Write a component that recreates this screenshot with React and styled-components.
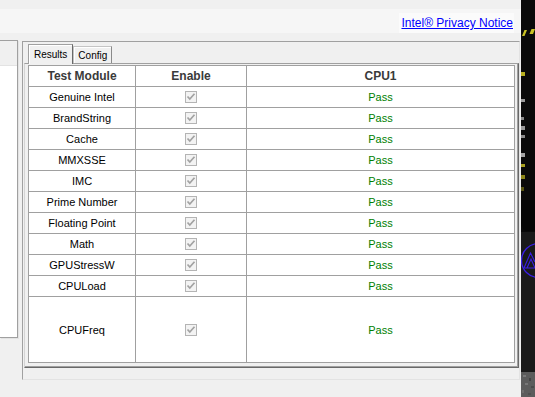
import { Fragment } from 'react'
import styled, { createGlobalStyle } from 'styled-components'

const GlobalStyle = createGlobalStyle`
  html, body {
    margin: 0;
    padding: 0;
  }
  body {
    background: #f0f0f0;
    font-family: "Liberation Sans", Arial, sans-serif;
  }
`

const Screen = styled.div`
  width: 535px;
  height: 397px;
  display: flex;
  overflow: hidden;
`

const Window = styled.div`
  width: 521px;
  display: flex;
  flex-direction: column;
  background: #f0f0f0;
`

const TopBand = styled.div`
  height: 9px;
  background: #f0f0f0;
`

const LinkBar = styled.div`
  height: 24px;
  background: #f6f6f6;
  display: flex;
  justify-content: flex-end;
  align-items: flex-end;
  padding-right: 7px;
`

const LinkBox = styled.div`
  height: 20px;
  width: 114px;
  background: #fbfbfb;
  display: flex;
  align-items: center;
  justify-content: flex-end;
  padding-right: 1px;
`

const PrivacyLink = styled.a`
  font-size: 12px;
  color: #0000ff;
  text-decoration: underline;
  white-space: nowrap;
`

const Body = styled.div`
  display: flex;
  align-items: flex-start;
  padding-top: 7px;
`

const SidePanel = styled.div`
  width: 18px;
  height: 298px;
  box-sizing: border-box;
  border: 1px solid #a0a0a0;
  border-left: none;
  background: #fff;
  box-shadow: 1px 1px 0 #e3e3e3;
  display: flex;
  flex-direction: column;
`

const SideHeader = styled.div`
  height: 25px;
  box-sizing: border-box;
  background: #f0f0f0;
  border-bottom: 1px solid #e3e3e3;
`

const Frame = styled.div`
  margin: 1px 0 0 4px;
  width: 498px;
  height: 339px;
  box-sizing: border-box;
  border-left: 1px solid #a0a0a0;
  border-top: 1px solid #a0a0a0;
  border-right: 1px solid #e3e3e3;
  border-bottom: 1px solid #e3e3e3;
  display: flex;
  flex-direction: column;
`

const TabStrip = styled.div`
  height: 21px;
  display: flex;
  align-items: flex-end;
  padding-left: 5px;
  position: relative;
  z-index: 1;
`

const Tab = styled.div`
  box-sizing: border-box;
  height: ${p => (p.$active ? '20px' : '17px')};
  margin-bottom: ${p => (p.$active ? '-1px' : '0')};
  padding: 0 ${p => (p.$active ? '5px' : '4px')};
  display: flex;
  align-items: center;
  font-size: 10px;
  color: #000;
  background: #f0f0f0;
  border: 1px solid ${p => (p.$active ? '#a0a0a0' : '#c4c4c4')};
  border-bottom: none;
  border-right-color: ${p => (p.$active ? '#696969' : '#8a8a8a')};
  box-shadow: inset 1px 1px 0 #ffffff;
`

const TabPage = styled.div`
  margin-left: 1px;
  width: 495px;
  height: 305px;
  box-sizing: border-box;
  border-top: 1px solid #a0a0a0;
  border-left: 1px solid #d4d4d4;
  border-right: 1px solid #696969;
  border-bottom: 1px solid #696969;
  box-shadow: inset -1px -1px 0 #a0a0a0;
  background: #f0f0f0;
  padding: 1px 3px 4px 3px;
`

const Grid = styled.div`
  display: grid;
  grid-template-columns: 106px 110px 267px;
  grid-template-rows: repeat(11, 20px) 65px;
  gap: 1px;
  padding: 1px;
  width: 487px;
  box-sizing: border-box;
  background: #a0a0a0;
`

const HeadCell = styled.div`
  background: #fff;
  display: flex;
  align-items: center;
  justify-content: center;
  font-size: 12px;
  font-weight: bold;
  color: #3a3a3a;
`

const Cell = styled.div`
  background: #fff;
  display: flex;
  align-items: center;
  justify-content: center;
  font-size: 11px;
  color: ${p => (p.$pass ? '#008000' : '#000')};
`

const Gap = styled.div`
  flex: 1;
`

const Wallpaper = styled.div`
  width: 14px;
  height: 397px;
  background: #0b0b0b;
  line-height: 0;
`

const modules = [
  'Genuine Intel',
  'BrandString',
  'Cache',
  'MMXSSE',
  'IMC',
  'Prime Number',
  'Floating Point',
  'Math',
  'GPUStressW',
  'CPULoad',
  'CPUFreq',
]

function DisabledCheck() {
  return (
    <svg width="12" height="12" viewBox="0 0 12 12">
      <rect x="0.5" y="0.5" width="11" height="11" fill="#f3f3f3" stroke="#b4b4b4" />
      <path d="M2.5 5.5 L4.8 8 L9.5 2.8" fill="none" stroke="#a2a2a2" strokeWidth="1.7" />
    </svg>
  )
}

function DesktopEdge() {
  return (
    <svg width="14" height="397" viewBox="0 0 14 397">
      <rect width="14" height="397" fill="#0a0a0a" />
      <path d="M0 232 L14 232 L14 372 L0 372 Z" fill="#1a1a1a" />
      <path d="M0 200 L14 200 L14 231 L8 231 Q0 231 0 222 Z" fill="#060606" />
      <polygon points="1,36 3.5,30 6,30 3.5,36" fill="#c9c224" />
      <polygon points="8.5,34 10.5,29 14,29 12,34" fill="#c9c224" />
      <rect x="0" y="72" width="4" height="4" fill="#b8b020" />
      <rect x="0" y="99" width="4" height="3" fill="#9a9a9a" />
      <rect x="0" y="117" width="3" height="3" fill="#8a8a8a" />
      <rect x="0" y="126" width="4" height="4" fill="#9a9a9a" />
      <rect x="0" y="135" width="4" height="3" fill="#8a8a8a" />
      <rect x="0" y="153" width="4" height="4" fill="#a5a5a5" />
      <rect x="0" y="164" width="4" height="3" fill="#a8a020" />
      <rect x="0" y="175" width="4" height="4" fill="#8c8618" />
      <rect x="0" y="187" width="3" height="4" fill="#5a5612" />
      <circle cx="17.5" cy="260.5" r="17" fill="none" stroke="#3a1ee6" strokeWidth="1.3" />
      <path d="M3 268 L9.5 253 L14 262 M6 268 L10 259 L14 268 M3 268 L14 268" fill="none" stroke="#3a1ee6" strokeWidth="1.1" />
      <rect x="0" y="372" width="14" height="25" fill="#5c5c5c" />
      <rect x="2" y="375" width="3" height="2" fill="#7a7a7a" />
      <rect x="8" y="378" width="2" height="3" fill="#444" />
      <rect x="4" y="383" width="3" height="2" fill="#777" />
      <rect x="10" y="386" width="3" height="2" fill="#4a4a4a" />
      <rect x="1" y="390" width="2" height="3" fill="#6e6e6e" />
      <rect x="7" y="393" width="3" height="2" fill="#505050" />
    </svg>
  )
}

export default function App() {
  return (
    <Screen>
      <GlobalStyle />
      <Window>
        <TopBand />
        <LinkBar>
          <LinkBox>
            <PrivacyLink href="#">Intel® Privacy Notice</PrivacyLink>
          </LinkBox>
        </LinkBar>
        <Body>
          <SidePanel>
            <SideHeader />
          </SidePanel>
          <Frame>
            <TabStrip>
              <Tab $active>Results</Tab>
              <Tab>Config</Tab>
            </TabStrip>
            <TabPage>
              <Grid>
                <HeadCell>Test Module</HeadCell>
                <HeadCell>Enable</HeadCell>
                <HeadCell>CPU1</HeadCell>
                {modules.map(name => (
                  <Fragment key={name}>
                    <Cell>{name}</Cell>
                    <Cell><DisabledCheck /></Cell>
                    <Cell $pass>Pass</Cell>
                  </Fragment>
                ))}
              </Grid>
            </TabPage>
            <Gap />
          </Frame>
        </Body>
      </Window>
      <Wallpaper>
        <DesktopEdge />
      </Wallpaper>
    </Screen>
  )
}
